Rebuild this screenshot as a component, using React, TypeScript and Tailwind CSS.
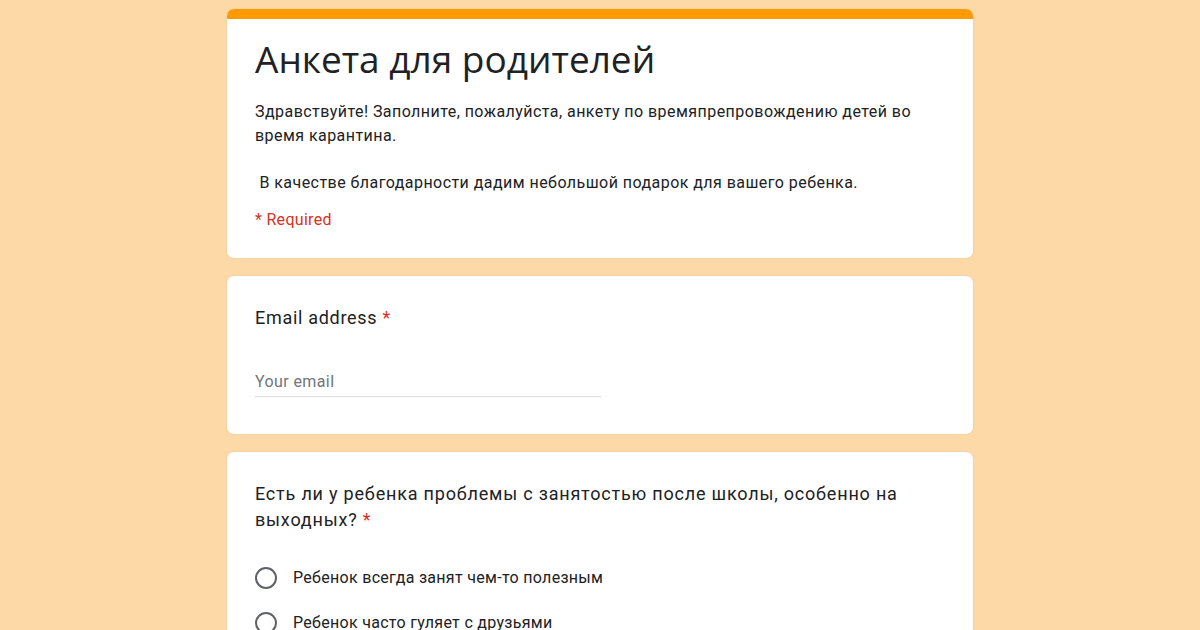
import React from 'react';

const font = { fontFamily: 'Roboto, "Noto Sans", sans-serif' };

function Radio({ label }: { label: string }) {
  return (
    <div className="flex items-center h-[22px] mb-[23px]">
      <span className="w-[22px] h-[22px] rounded-full border-2 border-[#5f6368] shrink-0" />
      <span className="ml-[16px] text-[16px] text-[#202124] tracking-[0.3px]">{label}</span>
    </div>
  );
}

export default function App() {
  return (
    <div className="w-[1200px] h-[630px] overflow-hidden bg-[#fdd9a7] text-[#202124]" style={font}>
      <div className="w-[748px] ml-[226px] pt-[8px] flex flex-col gap-[16px]">
        {/* Header card */}
        <div className="bg-white rounded-[8px] overflow-hidden border border-[#f3d2a3]">
          <div className="h-[10px] bg-[#ff9a00]" />
          <div className="px-[28px] pt-[16px] pb-[28px]">
            <h1 className="text-[37px] leading-[48px] text-[#202124]" style={{ fontFamily: '"Open Sans", Roboto, sans-serif' }}>
              Анкета для родителей
            </h1>
            <div className="mt-[17px] max-w-[670px] text-[16px] leading-[23.5px] tracking-[0.45px] text-[#202124]">
              <p>Здравствуйте! Заполните, пожалуйста, анкету по времяпрепровождению детей во время карантина.</p>
              <p>&nbsp;</p>
              <p>&nbsp;В качестве благодарности дадим небольшой подарок для вашего ребенка.</p>
            </div>
            <div className="mt-[16px] text-[16px] leading-[20px] tracking-[0.3px] text-[#d93025]">* Required</div>
          </div>
        </div>

        {/* Email card */}
        <div className="bg-white rounded-[8px] border border-[#f3d2a3] h-[160px] px-[28px] pt-[30px]">
          <div className="text-[18px] leading-[24px] tracking-[0.7px]">
            Email address <span className="text-[#d93025]">*</span>
          </div>
          <div className="mt-[42px] w-[346px] border-b border-[#dadce0] pb-[4px] text-[16px] leading-[20px] tracking-[0.4px] text-[#70757a]">
            Your email
          </div>
        </div>

        {/* Question card */}
        <div className="bg-white rounded-[8px] border border-[#f3d2a3] h-[300px] px-[28px] pt-[29px]">
          <div className="text-[18px] leading-[26px] tracking-[0.8px]">
            Есть ли у ребенка проблемы с занятостью после школы, особенно на выходных? <span className="text-[#d93025]">*</span>
          </div>
          <div className="mt-[34px]">
            <Radio label="Ребенок всегда занят чем-то полезным" />
            <Radio label="Ребенок часто гуляет с друзьями" />
          </div>
        </div>
      </div>
    </div>
  );
}
